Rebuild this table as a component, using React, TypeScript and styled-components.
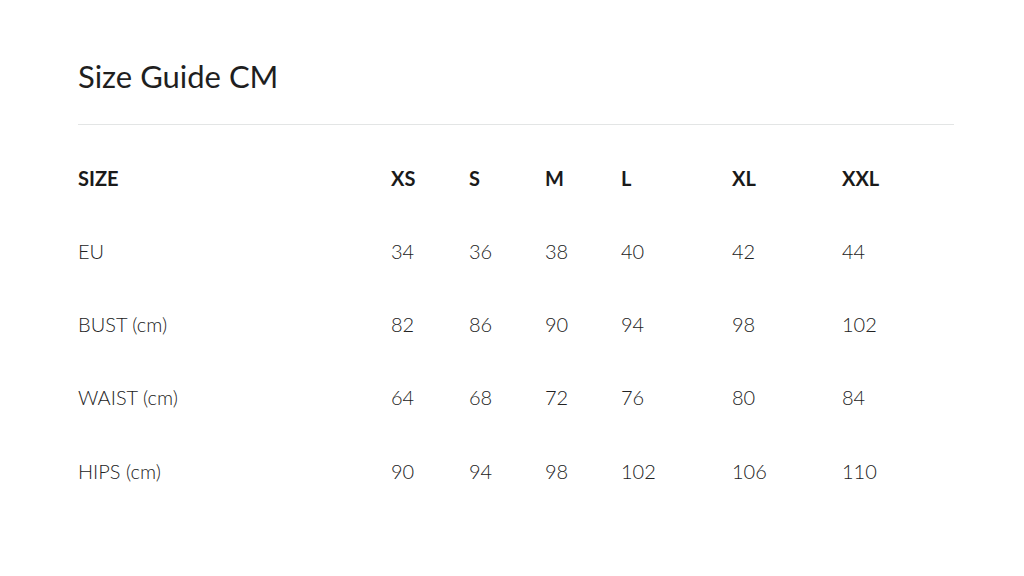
import styled, { createGlobalStyle } from "styled-components";

const GlobalStyle = createGlobalStyle`
  body {
    margin: 0;
    background: #ffffff;
    font-family: Lato, "Liberation Sans", sans-serif;
    color: #222222;
  }
`;

const header = ["SIZE", "XS", "S", "M", "L", "XL", "XXL"];

const rows = [
  ["EU", "34", "36", "38", "40", "42", "44"],
  ["BUST (cm)", "82", "86", "90", "94", "98", "102"],
  ["WAIST (cm)", "64", "68", "72", "76", "80", "84"],
  ["HIPS (cm)", "90", "94", "98", "102", "106", "110"],
];

const App = () => {
  return (
    <Page>
      <GlobalStyle />
      <Title>Size Guide CM</Title>
      <Divider />
      <Table>
        {header.map((h) => (
          <Cell key={h} $head>
            {h}
          </Cell>
        ))}
        {rows.map((row) =>
          row.map((value, i) => <Cell key={row[0] + i}>{value}</Cell>)
        )}
      </Table>
    </Page>
  );
};

const Page = styled.div`
  padding: 56px 70px 0 78px;
`;

const Title = styled.h1`
  margin: 0;
  font-size: 31px;
  line-height: 40px;
  font-weight: 400;
  color: #1f1f1f;
`;

const Divider = styled.div`
  height: 1px;
  background-color: #e3e5e5;
  margin-top: 28px;
`;

const Table = styled.div`
  display: grid;
  grid-template-columns: 313px 78px 76px 76px 111px 110px 1fr;
  grid-auto-rows: 73.25px;
  margin-top: 16px;
`;

const Cell = styled.div<{ $head?: boolean }>`
  display: flex;
  align-items: center;
  font-size: 20px;
  font-weight: ${(p) => (p.$head ? 700 : 300)};
  color: ${(p) => (p.$head ? "#1a1a1a" : "#222222")};
`;

export default App;
